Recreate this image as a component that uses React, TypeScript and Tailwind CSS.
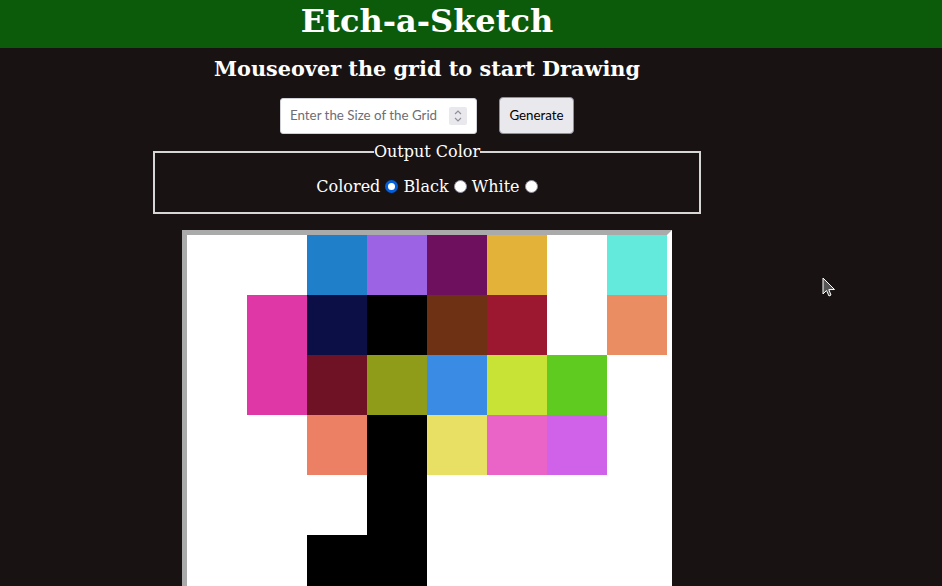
import React from "react";

const W = "#ffffff";
const K = "#000000";
const rows: string[][] = [
  [W, W, "#1f7fc8", "#9c63e5", "#6f105f", "#e3b238", W, "#64eadc"],
  [W, "#e037a7", "#0b0f45", K, "#6f3114", "#9b1830", W, "#ea8d63"],
  [W, "#e037a7", "#701225", "#8f9c1a", "#398be3", "#c8e335", "#5fca20", W],
  [W, W, "#eb8064", K, "#e8df65", "#e964c6", "#cf62e8", W],
  [W, W, W, K, W, W, W, W],
  [W, W, K, K, W, W, W, W],
  [W, W, W, W, W, W, W, W],
  [W, W, W, W, W, W, W, W],
];

function Radio({ checked }: { checked?: boolean }) {
  return checked ? (
    <span className="inline-block w-[13px] h-[13px] rounded-full border-[3px] border-[#0060df] bg-white align-[-1px]" />
  ) : (
    <span className="inline-block w-[13px] h-[13px] rounded-full border border-[#8f8f9d] bg-white align-[-1px]" />
  );
}

export default function App() {
  return (
    <div className="relative h-screen overflow-hidden bg-[#181212] text-white font-['DejaVu_Serif',serif]">
      <header className="h-12 bg-[#0b5b0b]">
        <div className="w-[854px] text-center">
          <h1 className="text-[32px] font-bold leading-[42px]">Etch-a-Sketch</h1>
        </div>
      </header>
      <main className="w-[854px] flex flex-col items-center">
        <h3 className="mt-[9px] text-[20.8px] font-bold leading-[24px]">
          Mouseover the grid to start Drawing
        </h3>
        <div className="mt-[16px] flex items-center gap-[22px] font-['Lato',sans-serif] text-[13.33px]">
          <div className="w-[197px] h-[36px] bg-white border border-[#d0d0d7] rounded-[3px] flex items-center pl-[9px] pr-[9px]">
            <span className="flex-1 text-[#6d6d76]">Enter the Size of the Grid</span>
            <span className="w-[18px] h-[18px] bg-[#e9e9ed] rounded-[2px] flex flex-col items-center justify-center gap-[2px]">
              <svg width="8" height="5" viewBox="0 0 8 5"><path d="M1 4 L4 1 L7 4" fill="none" stroke="#8f8f9d" strokeWidth="1.2" /></svg>
              <svg width="8" height="5" viewBox="0 0 8 5"><path d="M1 1 L4 4 L7 1" fill="none" stroke="#8f8f9d" strokeWidth="1.2" /></svg>
            </span>
          </div>
          <div className="w-[75px] h-[37px] bg-[#e9e8ed] border border-[#8f8f9d] rounded-[4px] flex items-center justify-center text-black">
            Generate
          </div>
        </div>
        <fieldset className="mt-[8px] w-[548px] h-[72px] border-2 border-[#d6d6d6] px-[10px]">
          <legend className="mx-auto text-[16px] leading-[19px]">Output Color</legend>
          <div className="mt-[16px] text-center text-[16px] leading-[19px]">
            Colored <Radio checked /> Black <Radio /> White <Radio />
          </div>
        </fieldset>
        <div className="mt-[16px] border-[5px] border-t-[#aaaaaa] border-l-[#aaaaaa] border-r-white border-b-white">
          <div className="grid grid-cols-8">
            {rows.flat().map((c, i) => (
              <div key={i} className="w-[60px] h-[60px]" style={{ backgroundColor: c }} />
            ))}
          </div>
        </div>
      </main>
      <svg className="absolute left-[822px] top-[277px]" width="14" height="21" viewBox="0 0 14 21">
        <path d="M1 1 L1 17 L4.5 13.5 L7 19 L9 18 L6.8 12.6 L12.5 12.5 Z" fill="#555" stroke="#fff" strokeWidth="1" strokeLinejoin="round" />
      </svg>
    </div>
  );
}
